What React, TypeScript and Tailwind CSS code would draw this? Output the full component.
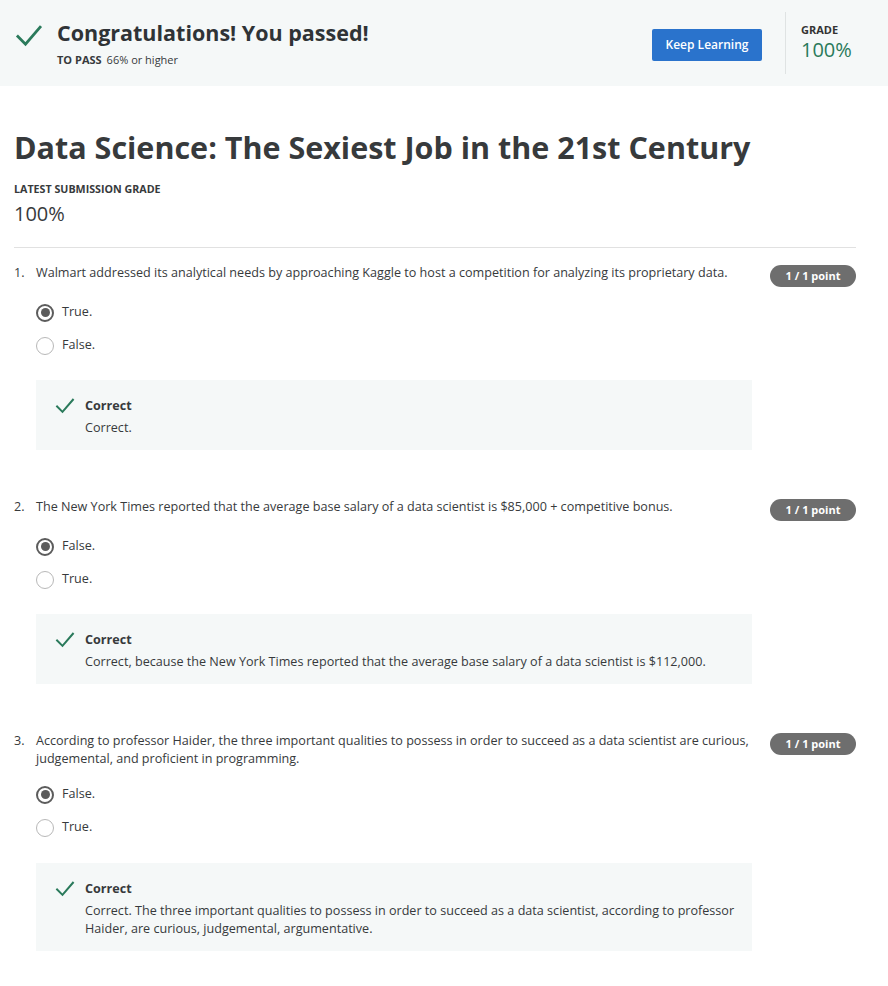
import React from 'react';

type Question = {
  num: number;
  text: string;
  options: string[];
  feedback: string;
  optionsTop: string;
  boxTop: string;
};

const questions: Question[] = [
  {
    num: 1,
    text: 'Walmart addressed its analytical needs by approaching Kaggle to host a competition for analyzing its proprietary data.',
    options: ['True.', 'False.'],
    feedback: 'Correct.',
    optionsTop: 'mt-[14px]',
    boxTop: 'mt-[18px]',
  },
  {
    num: 2,
    text: 'The New York Times reported that the average base salary of a data scientist is $85,000 + competitive bonus.',
    options: ['False.', 'True.'],
    feedback: 'Correct, because the New York Times reported that the average base salary of a data scientist is $112,000.',
    optionsTop: 'mt-[14px]',
    boxTop: 'mt-[18px]',
  },
  {
    num: 3,
    text: 'According to professor Haider, the three important qualities to possess in order to succeed as a data scientist are curious, judgemental, and proficient in programming.',
    options: ['False.', 'True.'],
    feedback:
      'Correct. The three important qualities to possess in order to succeed as a data scientist, according to professor Haider, are curious, judgemental, argumentative.',
    optionsTop: 'mt-[10px]',
    boxTop: 'mt-[19px]',
  },
];

function Check({ className }: { className?: string }) {
  return (
    <svg viewBox="0 0 24 24" fill="none" stroke="#2a7a5b" strokeWidth="2.4" strokeLinecap="square" className={className}>
      <path d="M2.5 12.5 L9 19 L21.5 4.5" />
    </svg>
  );
}

function Radio({ checked }: { checked: boolean }) {
  if (checked) {
    return (
      <span className="w-[18px] h-[18px] rounded-full border-2 border-[#5c5c5c] flex items-center justify-center shrink-0">
        <span className="w-[9px] h-[9px] rounded-full bg-[#5c5c5c]" />
      </span>
    );
  }
  return <span className="w-[18px] h-[18px] rounded-full border-[1.5px] border-[#b8b8b8] shrink-0" />;
}

function QuestionBlock({ q }: { q: Question }) {
  return (
    <div className="flex items-start">
      <div className="flex w-[738px]">
        <span className="w-[22px] shrink-0 leading-[18px]">{q.num}.</span>
        <div className="w-[716px]">
          <p className="leading-[18px]">{q.text}</p>
          <div className={q.optionsTop}>
            {q.options.map((opt, i) => (
              <div key={opt} className="h-[33px] flex items-center">
                <Radio checked={i === 0} />
                <span className="ml-[8px]">{opt}</span>
              </div>
            ))}
          </div>
          <div className={`${q.boxTop} bg-[#f5f8f8] pt-[17px] pb-[13px] pl-[19px] pr-[12px] flex`}>
            <Check className="w-[20px] h-[20px] mt-[-1px] shrink-0" />
            <div className="ml-[10px]">
              <div className="font-bold leading-[18px]">Correct</div>
              <div className="mt-[4px] leading-[18px]">{q.feedback}</div>
            </div>
          </div>
        </div>
      </div>
      <span className="ml-[18px] mt-[1px] w-[86px] h-[22px] rounded-full bg-[#6e6e6e] text-white text-[11px] font-bold flex items-center justify-center">
        1 / 1 point
      </span>
    </div>
  );
}

export default function App() {
  return (
    <div className="w-[888px] min-h-[986px] bg-white text-[#373a3c] text-[12.6px]" style={{ fontFamily: '"Open Sans", "Liberation Sans", sans-serif' }}>
      <div className="h-[86px] bg-[#f5f8f8] flex items-center">
        <Check className="w-[28px] h-[28px] ml-[15px] mt-[-14px]" />
        <div className="ml-[14px] flex-1">
          <div className="text-[21.5px] font-bold leading-[28px] text-[#2f3336]">Congratulations! You passed!</div>
          <div className="mt-[5px] text-[11px] leading-[16px]">
            <span className="font-bold">TO PASS</span>
            <span className="ml-[5px]">66% or higher</span>
          </div>
        </div>
        <button className="w-[110px] h-[32px] bg-[#2a73cc] rounded-[2px] text-white text-[12px] font-semibold mt-[4px]">
          Keep Learning
        </button>
        <div className="w-px h-[62px] bg-[#dfe3e3] ml-[23px]" />
        <div className="ml-[15px] w-[87px]">
          <div className="text-[11px] font-bold leading-[14px] text-[#333]">GRADE</div>
          <div className="text-[20px] leading-[26px] text-[#2a7a5b]">100%</div>
        </div>
      </div>

      <div className="pl-[14px] pr-[32px]">
        <h1 className="mt-[41px] text-[30.5px] font-bold leading-[40px] text-[#373a3c]">
          Data Science: The Sexiest Job in the 21st Century
        </h1>
        <div className="mt-[14px] text-[10.7px] font-bold leading-[16px]">LATEST SUBMISSION GRADE</div>
        <div className="mt-[2px] text-[20px] leading-[30px]">100%</div>
        <div className="mt-[18px] h-px bg-[#e1e1e1]" />

        <div className="mt-[16px] flex flex-col gap-[48px]">
          {questions.map((q) => (
            <QuestionBlock key={q.num} q={q} />
          ))}
        </div>
      </div>
    </div>
  );
}
